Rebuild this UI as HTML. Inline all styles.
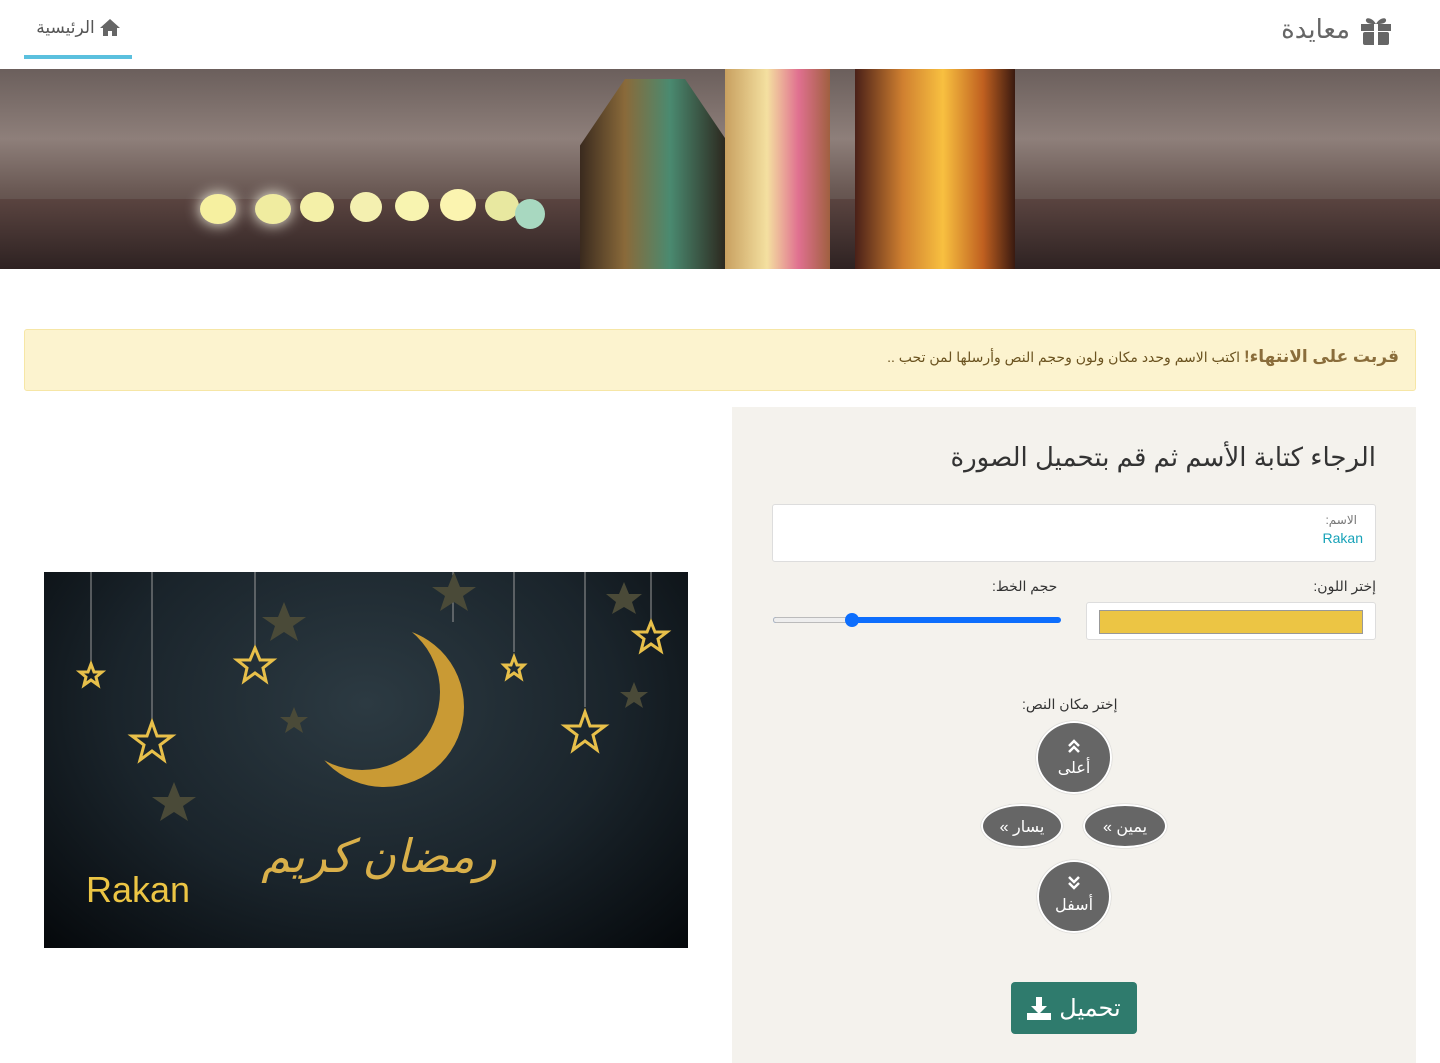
<!DOCTYPE html>
<html dir="rtl"><head><meta charset="utf-8"><style>
*{box-sizing:border-box;margin:0;padding:0}
body{width:1440px;height:1063px;overflow:hidden;background:#fff;font-family:"Liberation Sans","Noto Sans CJK SC","DejaVu Sans",sans-serif;color:#333;position:relative}
.a{position:absolute}
.btn{position:absolute;background:#666;color:#fff;border:2px solid #fff;border-radius:50%;text-align:center;font-size:16px;box-shadow:0 0 1px #999}
</style></head><body>
<div class="a" style="left:0;top:0;width:1440px;height:69px;background:#fff"></div>
<div class="a" style="right:48px;top:14px;font-size:26px;color:#666;display:flex;align-items:center;gap:10px;direction:rtl">
<svg width="32" height="30" viewBox="0 0 32 30"><rect x="1" y="9" width="30" height="7" fill="#666"/><rect x="3" y="17" width="26" height="13" rx="2" fill="#666"/><rect x="14" y="9" width="4" height="21" fill="#fff"/><path d="M16 9C12 2 5 2 6 6c1 3 6 3 10 3zM16 9c4-7 11-7 10-3-1 3-6 3-10 3z" fill="#666"/></svg>
<span>معايدة</span></div>
<div class="a" style="left:24px;top:14px;width:108px;height:45px;border-bottom:4px solid #5bc0de;font-size:17px;color:#555;text-align:center;padding-top:4px;display:flex;justify-content:center;gap:5px;direction:rtl">
<svg width="20" height="18" viewBox="0 0 20 18"><path d="M10 1L0 10h3v8h5v-5h4v5h5v-8h3z" fill="#666"/></svg><span>الرئيسية</span></div>
<div class="a" style="left:0;top:69px;width:1440px;height:200px;background:linear-gradient(180deg,#6b5f5c 0%,#8e7f7a 35%,#6b5a55 60%,#3b2d2b 100%);overflow:hidden">
<div class="a" style="left:0;top:130px;width:1440px;height:70px;background:linear-gradient(180deg,#5a4440,#2e2222)"></div>
<div class="a" style="left:200px;top:125px;width:36px;height:30px;border-radius:50%;background:#f6f0a0;box-shadow:0 0 15px #ffe"></div>
<div class="a" style="left:255px;top:125px;width:36px;height:30px;border-radius:50%;background:#f0eca0;box-shadow:0 0 15px #ffe"></div>
<div class="a" style="left:300px;top:123px;width:34px;height:30px;border-radius:50%;background:#f4f0a8"></div>
<div class="a" style="left:350px;top:123px;width:32px;height:30px;border-radius:50%;background:#f4f0b0"></div>
<div class="a" style="left:395px;top:122px;width:34px;height:30px;border-radius:50%;background:#f8f4b0"></div>
<div class="a" style="left:440px;top:120px;width:36px;height:32px;border-radius:50%;background:#fbf4b0"></div>
<div class="a" style="left:485px;top:122px;width:34px;height:30px;border-radius:50%;background:#e8e8a0"></div>
<div class="a" style="left:515px;top:130px;width:30px;height:30px;border-radius:50%;background:#a8d8c0"></div>
<div class="a" style="left:580px;top:10px;width:150px;height:190px;background:linear-gradient(90deg,#3a2a1e,#8a6a3a 30%,#4a8a70 60%,#2a2018);clip-path:polygon(30% 0,70% 0,100% 35%,100% 100%,0 100%,0 35%)"></div>
<div class="a" style="left:725px;top:0;width:105px;height:200px;background:linear-gradient(90deg,#c8a060,#f4e0a0 40%,#e07090 70%,#a06040)"></div>
<div class="a" style="left:855px;top:0;width:160px;height:200px;background:linear-gradient(90deg,#4a2018,#d08030 30%,#f8c040 55%,#c06020 80%,#3a1a10)"></div>
</div>
<div class="a" style="left:24px;top:329px;width:1392px;height:62px;background:#fcf3cf;border:1px solid #f6e6a6;border-radius:3px;color:#6b5320;font-size:14px;padding:17px 16px;text-align:right">
<b style="font-size:17px;color:#8a6d3b">قربت على الانتهاء!</b> اكتب الاسم وحدد مكان ولون وحجم النص وأرسلها لمن تحب ..</div>
<div class="a" style="left:732px;top:407px;width:684px;height:656px;background:#f4f2ed"></div>
<div class="a" style="right:64px;top:442px;font-size:26px;color:#333">الرجاء كتابة الأسم ثم قم بتحميل الصورة</div>
<div class="a" style="left:772px;top:504px;width:604px;height:58px;background:#fff;border:1px solid #ddd;border-radius:3px">
<div class="a" style="right:18px;top:8px;font-size:12px;color:#777">الاسم:</div>
<div class="a" style="right:12px;top:25px;font-size:14px;color:#17a2b8">Rakan</div></div>
<div class="a" style="right:64px;top:578px;font-size:14px">إختر اللون:</div>
<div class="a" style="left:1086px;top:602px;width:290px;height:38px;background:#fff;border:1px solid #ddd;border-radius:3px"><div class="a" style="left:12px;top:7px;width:264px;height:24px;background:#ecc544;border:1px solid #999"></div></div>
<div class="a" style="left:992px;top:578px;font-size:14px">حجم الخط:</div>
<div class="a" style="left:773px;top:617px;width:288px;height:6px;background:#0d6efd;border-radius:3px"><div class="a" style="left:0;top:0;width:78px;height:6px;background:#eee;border:1px solid #bbb;border-radius:3px"></div><div class="a" style="left:72px;top:-4px;width:14px;height:14px;border-radius:50%;background:#0d6efd"></div></div>
<div class="a" style="left:1022px;top:696px;font-size:14px">إختر مكان النص:</div>
<div class="btn" style="left:1036px;top:721px;width:76px;height:73px;padding-top:16px"><svg width="12" height="14" viewBox="0 0 12 14"><path d="M1 7l5-5 5 5M1 13l5-5 5 5" stroke="#fff" stroke-width="2.5" fill="none"/></svg><br>أعلى</div>
<div class="btn" style="left:1083px;top:804px;width:84px;height:44px;padding-top:11px">يمين »</div>
<div class="btn" style="left:981px;top:804px;width:82px;height:44px;padding-top:11px">يسار »</div>
<div class="btn" style="left:1037px;top:860px;width:74px;height:73px;padding-top:14px"><svg width="12" height="14" viewBox="0 0 12 14"><path d="M1 1l5 5 5-5M1 7l5 5 5-5" stroke="#fff" stroke-width="2.5" fill="none"/></svg><br>أسفل</div>
<div class="a" style="left:1011px;top:982px;width:126px;height:52px;background:#2f7b6d;border-radius:4px;color:#fff;font-size:24px;display:flex;align-items:center;justify-content:center;gap:8px">تحميل
<svg width="24" height="24" viewBox="0 0 24 24"><path d="M9 1h6v9h5l-8 8-8-8h5z M0 17h24v7H0z" fill="#fff"/></svg></div>
<div class="a" style="left:44px;top:572px;width:644px;height:376px;background:radial-gradient(ellipse at 50% 35%,#2c3a42,#1a242b 55%,#05080b);overflow:hidden">
<svg class="a" style="left:0;top:0" width="644" height="376">
<defs><mask id="m"><rect width="644" height="376" fill="#fff"/><circle cx="318" cy="120" r="78" fill="#000"/></mask></defs>
<g stroke="#999" stroke-width="1"><line x1="108" y1="0" x2="108" y2="150"/><line x1="211" y1="0" x2="211" y2="80"/><line x1="541" y1="0" x2="541" y2="135"/><line x1="607" y1="0" x2="607" y2="50"/><line x1="470" y1="0" x2="470" y2="80"/><line x1="47" y1="0" x2="47" y2="90"/><line x1="409" y1="0" x2="409" y2="50"/></g>
<g fill="none" stroke="#e8c04a" stroke-width="3"><polygon points="108,150 113,164 128,164 116,173 120,188 108,179 96,188 100,173 88,164 103,164"/><polygon points="211,76 216,88 229,88 219,96 222,109 211,101 200,109 203,96 193,88 206,88"/><polygon points="541,140 546,154 561,154 549,163 553,178 541,169 529,178 533,163 521,154 536,154"/><polygon points="607,50 611,60 623,60 614,67 617,79 607,72 597,79 600,67 591,60 603,60"/><polygon points="47,92 50,100 58,100 52,105 54,113 47,108 40,113 42,105 36,100 44,100"/><polygon points="470,85 473,93 480,93 475,98 477,106 470,101 463,106 465,98 460,93 467,93"/></g>
<g fill="#4a4a38"><polygon points="240,30 246,45 262,45 249,54 254,69 240,60 226,69 231,54 218,45 234,45"/><polygon points="410,0 416,15 432,15 419,24 424,39 410,30 396,39 401,24 388,15 404,15"/><polygon points="130,210 136,225 152,225 139,234 144,249 130,240 116,249 121,234 108,225 124,225"/><polygon points="590,110 594,120 604,120 596,126 599,136 590,130 581,136 584,126 576,120 586,120"/><polygon points="250,135 254,145 264,145 256,151 259,161 250,155 241,161 244,151 236,145 246,145"/><polygon points="580,10 585,22 598,22 588,30 592,42 580,35 568,42 572,30 562,22 575,22"/></g>
<circle cx="340" cy="135" r="80" fill="#c99a34" mask="url(#m)"/>
<text x="335" y="300" fill="#d9b04a" font-size="46" text-anchor="middle" font-style="italic" font-family="Noto Sans CJK SC,DejaVu Sans,sans-serif">رمضان كريم</text>
<text x="42" y="330" fill="#ecc544" font-size="36" font-family="Liberation Sans,sans-serif" direction="ltr">Rakan</text>
</svg></div>
</body></html>
